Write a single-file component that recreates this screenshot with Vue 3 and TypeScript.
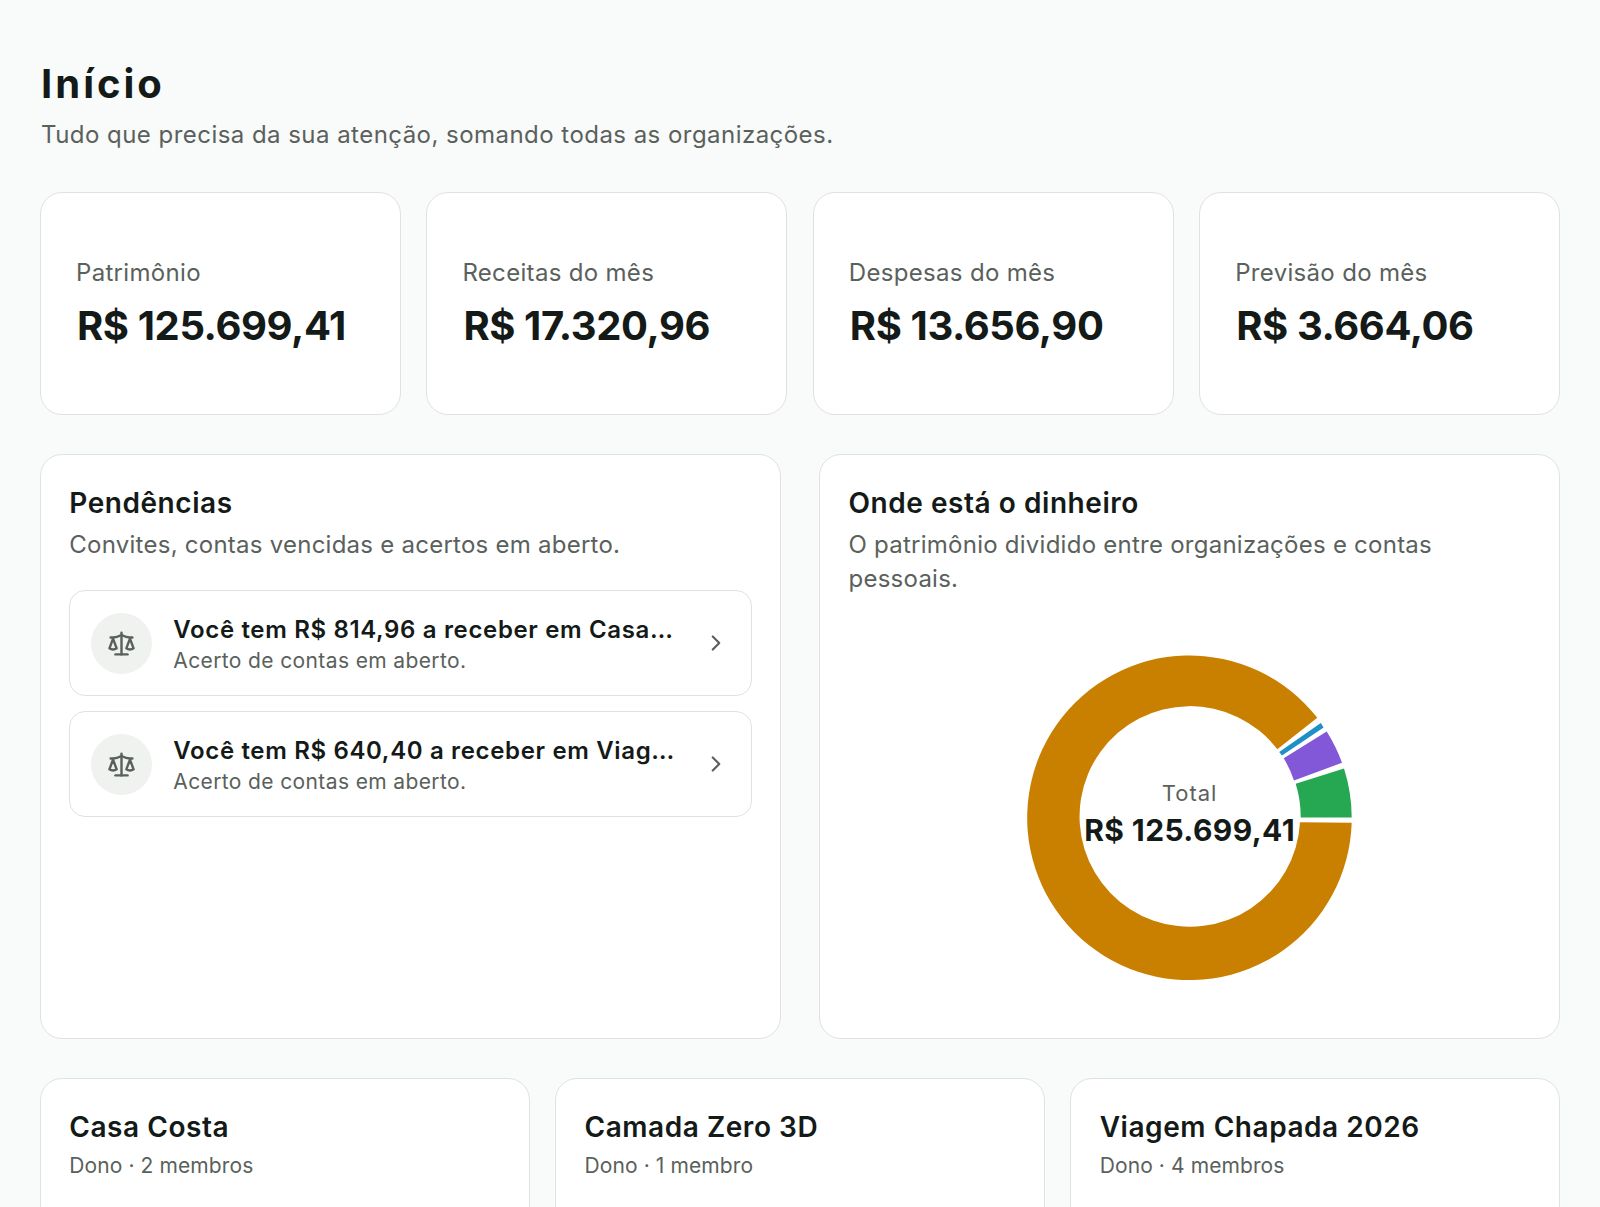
<script setup lang="ts">
interface Stat { label: string; value: string }
interface Pending { title: string }
interface Org { name: string; meta: string }
interface Slice { color: string; d: string }

const stats: Stat[] = [
  { label: 'Patrimônio', value: 'R$ 125.699,41' },
  { label: 'Receitas do mês', value: 'R$ 17.320,96' },
  { label: 'Despesas do mês', value: 'R$ 13.656,90' },
  { label: 'Previsão do mês', value: 'R$ 3.664,06' },
]
const pendings: Pending[] = [
  { title: 'Você tem R$ 814,96 a receber em Casa Costa' },
  { title: 'Você tem R$ 640,40 a receber em Viagem Chapada 2026' },
]
const orgs: Org[] = [
  { name: 'Casa Costa', meta: 'Dono · 2 membros' },
  { name: 'Camada Zero 3D', meta: 'Dono · 1 membro' },
  { name: 'Viagem Chapada 2026', meta: 'Dono · 4 membros' },
]
const slices: Slice[] = [
  { color: '#c98000', d: 'M297.3 69.8A162.3 162.3 0 1 0 331.7 174.8L280 174.2A110.3 110.3 0 1 1 257.3 101.2Z' },
  { color: '#26a752', d: 'M331.7 169.5A162.3 162.3 0 0 0 324 120.5L275.7 135.8A110.3 110.3 0 0 1 280.7 169.5Z' },
  { color: '#8257d8', d: 'M322 114.8A162.3 162.3 0 0 0 306.7 83.5L263.7 110.2A110.3 110.3 0 0 1 274 132.5Z' },
  { color: '#1e8fc7', d: 'M303.6 79.6A162.3 162.3 0 0 0 300.8 75L259.2 104A110.3 110.3 0 0 1 262 107.6Z' },
]
</script>

<template>
  <div class="page">
    <header class="head">
      <h1>Início</h1>
      <p>Tudo que precisa da sua atenção, somando todas as organizações.</p>
    </header>

    <section class="stats">
      <div v-for="s in stats" :key="s.label" class="card stat">
        <span class="stat-label">{{ s.label }}</span>
        <strong class="stat-value">{{ s.value }}</strong>
      </div>
    </section>

    <section class="middle">
      <div class="card panel">
        <h2>Pendências</h2>
        <p class="desc">Convites, contas vencidas e acertos em aberto.</p>
        <div class="items">
          <a v-for="p in pendings" :key="p.title" class="item">
            <span class="badge">
              <svg width="29" height="29" viewBox="0 0 24 24" fill="none" stroke="currentColor" stroke-width="2" stroke-linecap="round" stroke-linejoin="round">
                <path d="m16 16 3-8 3 8c-.87.65-1.92 1-3 1s-2.13-.35-3-1Z" />
                <path d="m2 16 3-8 3 8c-.87.65-1.92 1-3 1s-2.13-.35-3-1Z" />
                <path d="M7 21h10" />
                <path d="M12 3v18" />
                <path d="M3 7h2c2 0 5-1 7-2 2 1 5 2 7 2h2" />
              </svg>
            </span>
            <span class="item-text">
              <span class="item-title">{{ p.title }}</span>
              <span class="item-sub">Acerto de contas em aberto.</span>
            </span>
            <svg class="chev" width="26" height="26" viewBox="0 0 24 24" fill="none" stroke="currentColor" stroke-width="2" stroke-linecap="round" stroke-linejoin="round">
              <path d="m9 18 6-6-6-6" />
            </svg>
          </a>
        </div>
      </div>

      <div class="card panel">
        <h2>Onde está o dinheiro</h2>
        <p class="desc">O patrimônio dividido entre organizações e contas pessoais.</p>
        <div class="chart">
          <div class="donut">
            <svg width="340" height="340" viewBox="0 0 340 340">
              <path v-for="s in slices" :key="s.color" :d="s.d" :fill="s.color" />
            </svg>
            <div class="center">
              <span class="center-label">Total</span>
              <strong class="center-value">R$ 125.699,41</strong>
            </div>
          </div>
        </div>
      </div>
    </section>

    <section class="orgs">
      <div v-for="o in orgs" :key="o.name" class="card org">
        <h2>{{ o.name }}</h2>
        <p>{{ o.meta }}</p>
      </div>
    </section>
  </div>
</template>

<style>
html, body { margin: 0; background: #f9fafa; }
</style>

<style scoped>
.page {
  height: 1207px;
  overflow: hidden;
  box-sizing: border-box;
  padding: 58px 40px 0;
  background: #f9fafa;
  color: #141a17;
  font-family: "Inter", "Noto Sans", sans-serif;
}
.head h1 { margin: 0; font-size: 40px; line-height: 52px; font-weight: 700; letter-spacing: 3px; padding-left: 1px; }
.head p { margin: 7px 0 0; font-size: 24px; line-height: 36px; color: #5a615c; letter-spacing: 0.46px; padding-left: 1px; }
.head { margin-bottom: 39px; }
.card {
  box-sizing: border-box;
  background: #fff;
  border: 1.5px solid #e0e2e0;
  border-radius: 22px;
}
.stats {
  display: grid;
  grid-template-columns: repeat(4, minmax(0, 1fr));
  gap: 25.6px;
  margin-bottom: 39px;
}
.stat {
  height: 223px;
  padding: 0 35px;
  display: flex;
  flex-direction: column;
  justify-content: center;
  gap: 11px;
}
.stat-label { font-size: 24px; line-height: 34px; color: #5a615c; letter-spacing: 0.32px; }
.stat-value { font-size: 40px; line-height: 50px; font-weight: 700; letter-spacing: -0.4px; padding-left: 1px; }
.middle {
  display: grid;
  grid-template-columns: repeat(2, minmax(0, 1fr));
  gap: 38.4px;
  margin-bottom: 38.5px;
}
.panel { padding: 28px 28.3px; display: flex; flex-direction: column; }
.panel h2, .org h2 { margin: 0; font-size: 28px; line-height: 40px; font-weight: 600; letter-spacing: 0.55px; }
.desc { margin: 5px 0 0; font-size: 24px; line-height: 34px; color: #5a615c; letter-spacing: 0.25px; }
.items { display: flex; flex-direction: column; gap: 15px; margin-top: 28px; }
.item {
  height: 106px;
  box-sizing: border-box;
  display: flex;
  align-items: center;
  padding: 0 21px;
  border: 1.5px solid #e0e2e0;
  border-radius: 16px;
  gap: 21px;
}
.badge {
  flex: none;
  width: 61px;
  height: 61px;
  border-radius: 50%;
  background: #f0f2f0;
  color: #5a615c;
  display: flex;
  align-items: center;
  justify-content: center;
}
.item-text { flex: 1; min-width: 0; display: flex; flex-direction: column; gap: 1px; padding-top: 2px; }
.item-title {
  font-size: 24px;
  line-height: 32px;
  font-weight: 600;
  letter-spacing: 0.65px;
  white-space: nowrap;
  overflow: hidden;
  text-overflow: ellipsis;
}
.item-sub { font-size: 21px; line-height: 28px; color: #5a615c; letter-spacing: 0.38px; }
.chev { flex: none; color: #5a615c; margin-left: 4px; margin-right: 1px; }
.chart {
  margin-top: 29px;
  height: 385px;
  display: flex;
  align-items: center;
  justify-content: center;
}
.donut { position: relative; width: 340px; height: 340px; }
.donut svg { display: block; }
.center {
  position: absolute;
  inset: 0;
  display: flex;
  flex-direction: column;
  align-items: center;
  justify-content: center;
  gap: 2px;
  padding-bottom: 8px;
  box-sizing: border-box;
}
.center-label { font-size: 22px; line-height: 30px; color: #5a615c; letter-spacing: 1px; }
.center-value { font-size: 30px; line-height: 40px; font-weight: 700; letter-spacing: 0.4px; }
.orgs {
  display: grid;
  grid-template-columns: repeat(3, minmax(0, 1fr));
  gap: 25.6px;
}
.org { height: 240px; padding: 28px 28.3px; }
.org p { margin: 4px 0 0; font-size: 21px; line-height: 30px; color: #5a615c; letter-spacing: 0.1px; }
</style>
